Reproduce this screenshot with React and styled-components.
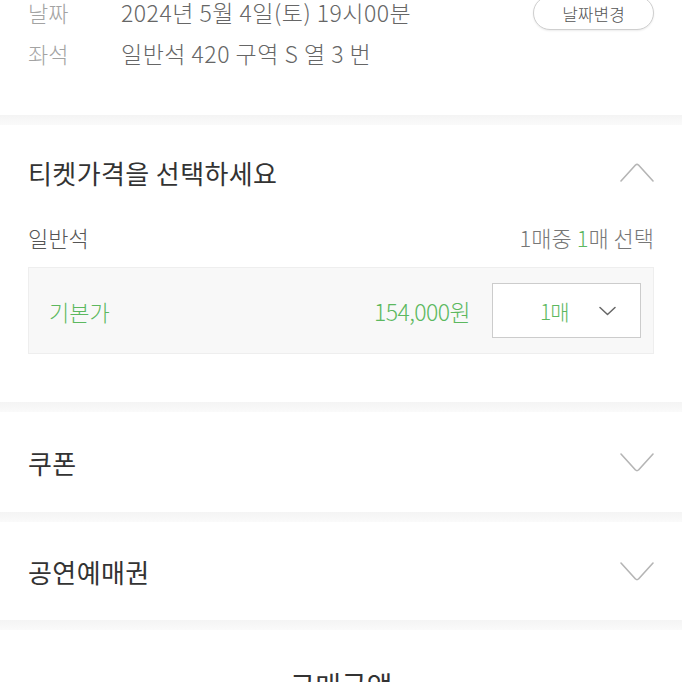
import React from "react";
import styled, { createGlobalStyle } from "styled-components";

const GlobalStyle = createGlobalStyle`
  html, body {
    margin: 0;
    padding: 0;
    background: #fff;
    overflow: hidden;
  }
  body {
    font-family: "Noto Sans CJK KR", "Noto Sans", sans-serif;
  }
`;

const Page = styled.div`
  width: 682px;
  height: 682px;
  overflow: hidden;
  background: #fff;
`;

const InfoSection = styled.section`
  margin-top: -9px;
  padding: 0 28px 42px;
`;

const InfoRow = styled.div`
  display: flex;
  align-items: center;
  height: 41px;
`;

const InfoLabel = styled.span`
  width: 93px;
  font-size: 22px;
  color: #a3a3a3;
  font-weight: 300;
`;

const InfoValue = styled.span`
  flex: 1;
  font-size: 23px;
  color: #666;
  font-weight: 300;
  letter-spacing: 0.5px;
`;

const PillButton = styled.button`
  height: 34px;
  width: 121px;
  margin-top: 3px;
  border: 1px solid #cfcfcf;
  border-radius: 17px;
  background: #fff;
  box-shadow: 0 1px 2px rgba(0, 0, 0, 0.08);
  font-family: inherit;
  font-size: 17px;
  font-weight: 300;
  color: #555;
  padding: 0;
`;

const Divider = styled.div`
  height: 10px;
  background: linear-gradient(#f4f4f4, #fafafa);
`;

const Section = styled.section`
  padding: 0 28px ${(p) => p.$bottom || 0}px;
`;

const SectionHeader = styled.div`
  display: flex;
  align-items: center;
  justify-content: space-between;
  height: ${(p) => p.$height || 100}px;
`;

const SectionTitle = styled.h2`
  margin: 0;
  font-size: 26px;
  font-weight: 400;
  color: #333;
  letter-spacing: 0.4px;
`;

const SeatRow = styled.div`
  display: flex;
  align-items: center;
  justify-content: space-between;
  height: 36px;
`;

const SeatName = styled.span`
  font-size: 22px;
  color: #555;
  font-weight: 300;
`;

const SeatCount = styled.span`
  font-size: 22px;
  color: #777;
  font-weight: 300;
`;

const Green = styled.span`
  color: #5cb85f;
`;

const PriceBox = styled.div`
  margin-top: 12px;
  height: 87px;
  box-sizing: border-box;
  display: flex;
  align-items: center;
  padding: 0 12px 0 20px;
  background: #f8f8f8;
  border: 1px solid #eeeeee;
`;

const PriceName = styled.span`
  flex: 1;
  font-size: 22px;
  color: #5cb85f;
  font-weight: 300;
`;

const PriceValue = styled.span`
  font-size: 23px;
  color: #5cb85f;
  font-weight: 300;
  letter-spacing: -0.6px;
  margin-right: 22px;
`;

const CountSelect = styled.div`
  width: 149px;
  height: 55px;
  box-sizing: border-box;
  display: flex;
  align-items: center;
  justify-content: space-between;
  padding: 0 24px 0 47px;
  background: #fff;
  border: 1px solid #cccccc;
  font-size: 21px;
  color: #5cb85f;
  font-weight: 300;
  letter-spacing: -1px;
`;

const TotalSection = styled.section`
  display: flex;
  justify-content: center;
  padding-top: 35px;
`;

const TotalTitle = styled.h2`
  margin: 0;
  font-size: 28px;
  font-weight: 400;
  color: #333;
`;

const Chevron = ({ up }) => (
  <svg width="34" height="19" viewBox="0 0 34 19" fill="none">
    <path
      d={up ? "M1 18 L15.5 2 Q17 0.8 18.5 2 L33 18" : "M1 1 L15.5 17 Q17 18.2 18.5 17 L33 1"}
      stroke="#b5b5b5"
      strokeWidth="1.6"
      strokeLinecap="round"
      strokeLinejoin="round"
    />
  </svg>
);

const SmallChevron = () => (
  <svg width="17" height="10" viewBox="0 0 17 10" fill="none">
    <path d="M1 1.5 L8.5 8.5 L16 1.5" stroke="#666" strokeWidth="1.5" strokeLinecap="round" strokeLinejoin="round" />
  </svg>
);

export default function App() {
  return (
    <Page>
      <GlobalStyle />
      <InfoSection>
        <InfoRow>
          <InfoLabel>날짜</InfoLabel>
          <InfoValue>2024년 5월 4일(토) 19시00분</InfoValue>
          <PillButton>날짜변경</PillButton>
        </InfoRow>
        <InfoRow>
          <InfoLabel>좌석</InfoLabel>
          <InfoValue>일반석 420 구역 S 열 3 번</InfoValue>
        </InfoRow>
      </InfoSection>
      <Divider />
      <Section $bottom={48}>
        <SectionHeader $height={94}>
          <SectionTitle>티켓가격을 선택하세요</SectionTitle>
          <Chevron up />
        </SectionHeader>
        <SeatRow>
          <SeatName>일반석</SeatName>
          <SeatCount>
            1매중 <Green>1</Green>매 선택
          </SeatCount>
        </SeatRow>
        <PriceBox>
          <PriceName>기본가</PriceName>
          <PriceValue>154,000원</PriceValue>
          <CountSelect>
            <span>1매</span>
            <SmallChevron />
          </CountSelect>
        </PriceBox>
      </Section>
      <Divider />
      <Section>
        <SectionHeader>
          <SectionTitle>쿠폰</SectionTitle>
          <Chevron />
        </SectionHeader>
      </Section>
      <Divider />
      <Section>
        <SectionHeader $height={98}>
          <SectionTitle>공연예매권</SectionTitle>
          <Chevron />
        </SectionHeader>
      </Section>
      <Divider />
      <TotalSection>
        <TotalTitle>구매금액</TotalTitle>
      </TotalSection>
    </Page>
  );
}
